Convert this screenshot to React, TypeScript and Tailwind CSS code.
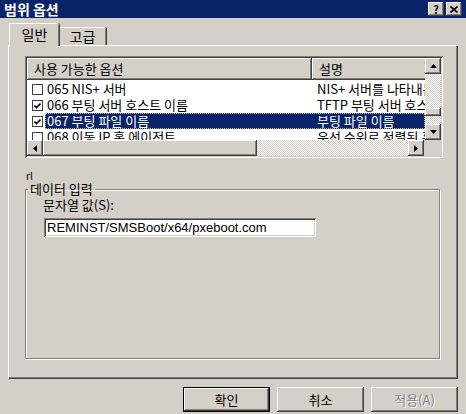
const raised =
  "bg-[#d4d0c8] shadow-[inset_-1px_-1px_#404040,inset_1px_1px_#ffffff,inset_-2px_-2px_#808080,inset_2px_2px_#d4d0c8]";
const sunken =
  "shadow-[inset_1px_1px_#808080,inset_-1px_-1px_#ffffff,inset_2px_2px_#404040,inset_-2px_-2px_#d4d0c8]";
const headerCell =
  "bg-[#d4d0c8] shadow-[inset_-1px_-1px_#404040,inset_1px_1px_#ffffff,inset_-2px_-2px_#808080]";
const checker =
  "bg-[image:repeating-conic-gradient(#d4d0c8_0_25%,#ffffff_0_50%)] bg-[length:2px_2px]";

const rows = [
  { value: "065", checked: false, name: "065 NIS+ 서버", desc: "NIS+ 서버를 나타내는 IP 주소 목록" },
  { value: "066", checked: true, name: "066 부팅 서버 호스트 이름", desc: "TFTP 부팅 서버 호스트 이름" },
  { value: "067", checked: true, name: "067 부팅 파일 이름", desc: "부팅 파일 이름", selected: true },
  { value: "068", checked: false, name: "068 이동 IP 홈 에이전트", desc: "우선 순위로 정렬된 홈 에이전트" },
];

function Arrow({ dir }: { dir: "up" | "down" | "left" | "right" }) {
  const pts = {
    up: "3.5,0 7,4 0,4",
    down: "0,0 7,0 3.5,4",
    left: "4,0 4,7 0,3.5",
    right: "0,0 4,3.5 0,7",
  }[dir];
  const vertical = dir === "up" || dir === "down";
  return (
    <svg width={vertical ? 7 : 4} height={vertical ? 4 : 7} viewBox={vertical ? "0 0 7 4" : "0 0 4 7"}>
      <polygon points={pts} fill="#000" />
    </svg>
  );
}

function ScrollButton({ dir }: { dir: "up" | "down" | "left" | "right" }) {
  return (
    <div className={`flex h-[16px] w-[16px] shrink-0 items-center justify-center ${raised}`}>
      <Arrow dir={dir} />
    </div>
  );
}

function CheckBox({ checked }: { checked: boolean }) {
  return (
    <div className="flex h-[11px] w-[11px] items-center justify-center border border-[#404040] bg-white">
      {checked && (
        <svg width="7" height="7" viewBox="0 0 7 7">
          <path d="M0.5 3.5 L2.5 5.5 L6.5 1.5" stroke="#000" strokeWidth="1.6" fill="none" />
        </svg>
      )}
    </div>
  );
}

function DlgButton({ label, isDefault, disabled }: { label: string; isDefault?: boolean; disabled?: boolean }) {
  return (
    <div className={`h-[25px] w-[87px] ${isDefault ? "border border-black" : ""}`}>
      <div
        className={`flex h-full w-full items-center justify-center text-[13px] leading-none ${raised} ${
          disabled ? "text-[#808080] [text-shadow:1px_1px_#ffffff]" : "text-black"
        }`}
      >
        {label}
      </div>
    </div>
  );
}

export default function App() {
  return (
    <div className="h-[414px] w-[466px] overflow-hidden bg-[#d4d0c8] font-['Noto_Sans_CJK_KR',sans-serif] text-[13px] text-black">
      {/* Title bar */}
      <div className="flex h-[18px] items-center justify-between bg-[#0a246a] pl-[4px] pr-[4px]">
        <span className="text-[14px] font-bold leading-none text-white">범위 옵션</span>
        <div className="flex gap-[2px]">
          <div className={`flex h-[14px] w-[16px] items-center justify-center text-[11px] font-bold leading-none ${raised}`}>
            ?
          </div>
          <div className={`flex h-[14px] w-[16px] items-center justify-center ${raised}`}>
            <svg width="8" height="7" viewBox="0 0 8 7">
              <path d="M0.5 0.5 L7.5 6.5 M7.5 0.5 L0.5 6.5" stroke="#000" strokeWidth="1.6" />
            </svg>
          </div>
        </div>
      </div>

      {/* Tabs */}
      <div className="mt-[5px] flex h-[22px] items-end pl-[9px]">
        <div className="relative z-10 -mb-[1px] flex h-[23px] w-[50px] items-start justify-center rounded-t-[2px] border-l border-t border-white bg-[#d4d0c8] pt-[2px] shadow-[inset_-1px_0_#808080,1px_0_#404040]">
          <span className="text-[14px] leading-[17px]">일반</span>
        </div>
        <div className="flex h-[18px] w-[47px] items-start justify-center rounded-t-[2px] border-t border-white bg-[#d4d0c8] shadow-[inset_-1px_0_#808080,1px_0_#404040]">
          <span className="text-[14px] leading-[17px]">고급</span>
        </div>
      </div>

      {/* Tab page */}
      <div className="ml-[8px] h-[334px] w-[450px] pl-[17px] pt-[11px] shadow-[inset_1px_1px_#ffffff,inset_-1px_-1px_#404040,inset_-2px_-2px_#808080]">
        {/* List view */}
        <div className={`h-[102px] w-[418px] bg-white p-[2px] ${sunken}`}>
          <div className="flex h-[82px]">
            <div className="w-[398px] overflow-hidden">
              <div className="flex h-[22px] leading-[16px]">
                <div className={`flex w-[285px] shrink-0 items-center pl-[7px] ${headerCell}`}>사용 가능한 옵션</div>
                <div className={`flex w-[200px] shrink-0 items-center pl-[7px] ${headerCell}`}>설명</div>
              </div>
              <div className="mt-[1px]">
                {rows.map((r) => (
                  <div key={r.value} className="flex h-[16px] items-center leading-[14px]">
                    <div className="flex w-[18px] shrink-0 justify-end pr-[2px]">
                      <CheckBox checked={r.checked} />
                    </div>
                    <div
                      className={`flex h-[16px] flex-1 items-center whitespace-nowrap ${
                        r.selected ? "border border-dotted border-[#c8c080] bg-[#0a246a] text-white" : "border border-transparent"
                      }`}
                    >
                      <div className="w-[266px] shrink-0 overflow-hidden pl-[1px]">{r.name}</div>
                      <div className="shrink-0 pl-[5px]">{r.desc}</div>
                    </div>
                  </div>
                ))}
              </div>
            </div>
            {/* Vertical scrollbar */}
            <div className="flex w-[16px] flex-col">
              <ScrollButton dir="up" />
              <div className={`h-[34px] ${checker}`} />
              <div className={`h-[8px] w-[16px] ${raised}`} />
              <div className={`flex-1 ${checker}`} />
              <ScrollButton dir="down" />
            </div>
          </div>
          {/* Horizontal scrollbar */}
          <div className="flex h-[16px]">
            <ScrollButton dir="left" />
            <div className={`h-[16px] w-[214px] ${raised}`} />
            <div className={`h-[16px] flex-1 ${checker}`} />
            <ScrollButton dir="right" />
            <div className="h-[16px] w-[17px] bg-[#d4d0c8]" />
          </div>
        </div>

        <div className="mt-[14px] h-[8px] pl-[1px] text-[10px] leading-[8px]">rl</div>

        {/* Data entry group */}
        <fieldset className="mt-[2px] h-[177px] w-[415px] border border-[#808080] pl-[17px] shadow-[inset_1px_1px_#ffffff,1px_1px_#ffffff]">
          <legend className="-ml-[15px] px-[2px] leading-[14px]">데이터 입력</legend>
          <div className="mt-[1px] h-[16px] leading-[16px]">문자열 값(S):</div>
          <div className={`ml-[1px] mt-[5px] flex h-[19px] w-[272px] items-center bg-white pl-[3px] ${sunken}`}>
            <span className="font-['Liberation_Sans',sans-serif] text-[13px] leading-none">REMINST/SMSBoot/x64/pxeboot.com</span>
          </div>
        </fieldset>
      </div>

      {/* Dialog buttons */}
      <div className="mt-[8px] flex justify-end gap-[7px] pr-[8px]">
        <DlgButton label="확인" isDefault />
        <DlgButton label="취소" />
        <DlgButton label="적용(A)" disabled />
      </div>
    </div>
  );
}
